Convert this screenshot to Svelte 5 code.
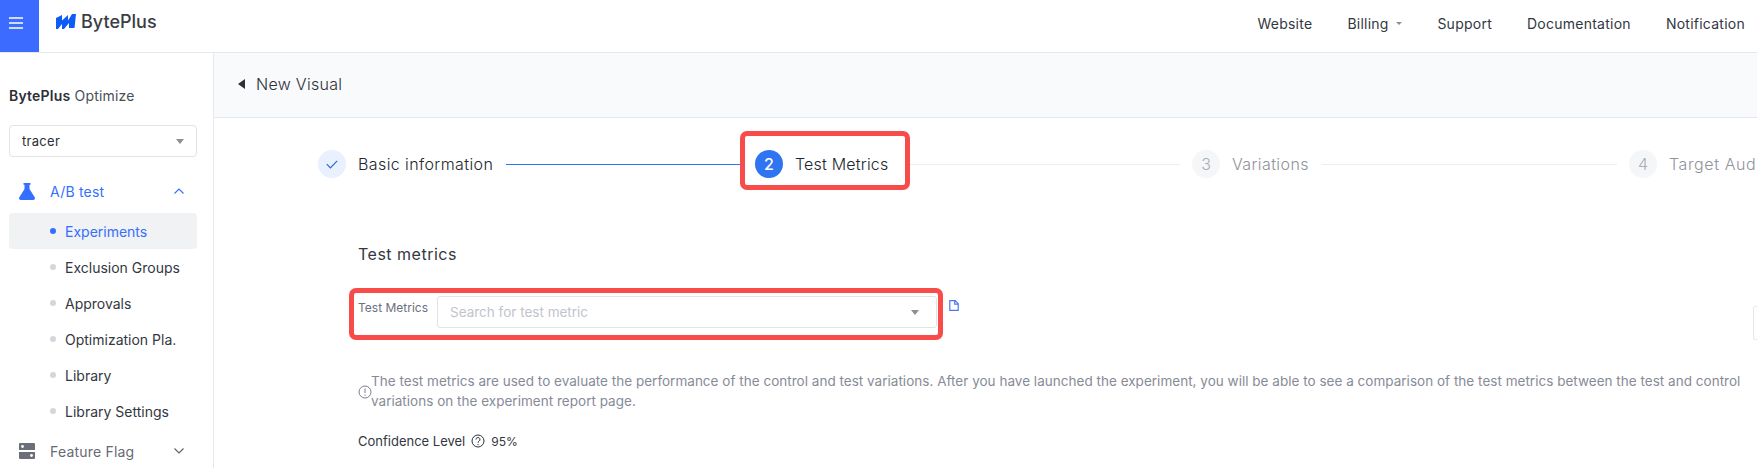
<script>
  const subItems = ['Exclusion Groups', 'Approvals', 'Optimization Pla.', 'Library', 'Library Settings'];
  const nav = ['Support', 'Documentation', 'Notification'];
</script>

<div class="page">
  <header class="top">
    <div class="burger">
      <svg width="14" height="12" viewBox="0 0 14 12"><path d="M0 1h14M0 6h14M0 11h14" stroke="#fff" stroke-width="1.4"/></svg>
    </div>
    <div class="logo">
      <svg width="20" height="15" viewBox="0 0 20 15"><path d="M0 4 6 1V6.500L12 1V6.500L16 0H20L18.500 14H13V9L8 15H6V10L2 15H0Z" fill="#0d5cf5"/></svg>
      <span>BytePlus</span>
    </div>
    <nav class="nav">
      <span>Website</span>
      <span class="billing">Billing <i class="caret small"></i></span>
      {#each nav as n}<span>{n}</span>{/each}
    </nav>
  </header>

  <div class="body">
    <aside class="side">
      <div class="brand"><b>BytePlus</b> Optimize</div>
      <div class="select"><span>tracer</span><i class="caret"></i></div>

      <div class="group active">
        <svg width="16" height="17" viewBox="0 0 16 17"><path d="M4.500 0h7v1.800h-1V6l5.200 8.300c.7 1.200 0 2.700-1.500 2.700H1.800C.3 17-.4 15.500.3 14.300L5.500 6V1.800h-1Z" fill="#3370ff"/></svg>
        <span>A/B test</span>
        <svg class="chev" width="10" height="6" viewBox="0 0 10 6"><path d="M.5 5.500 5 1l4.500 4.500" fill="none" stroke="#3370ff" stroke-width="1.100"/></svg>
      </div>
      <div class="item current"><i class="dot"></i>Experiments</div>
      {#each subItems as s}
        <div class="item"><i class="dot"></i>{s}</div>
      {/each}
      <div class="group last">
        <svg width="16" height="16" viewBox="0 0 16 16"><path d="M1 0h14a1 1 0 0 1 1 1v6H0V1a1 1 0 0 1 1-1ZM0 9h16v6a1 1 0 0 1-1 1H1a1 1 0 0 1-1-1Z" fill="#6b6f78"/><circle cx="3.500" cy="3.500" r="1.400" fill="#fff"/><circle cx="12.500" cy="12.500" r="1.400" fill="#fff"/></svg>
        <span>Feature Flag</span>
        <svg class="chev" width="10" height="6" viewBox="0 0 10 6"><path d="M.5.500 5 5 9.500.5" fill="none" stroke="#5a5f69" stroke-width="1.100"/></svg>
      </div>
    </aside>

    <main class="main">
      <div class="sub">
        <svg width="7" height="10" viewBox="0 0 7 10"><path d="M7 0v10L0 5Z" fill="#2b2f36"/></svg>
        <span>New Visual</span>
      </div>

      <div class="steps">
        <span class="circle done">
          <svg width="12" height="9" viewBox="0 0 12 9"><path d="M.8 4.200 4.400 7.800 11.200.8" fill="none" stroke="#2f66d8" stroke-width="1.200"/></svg>
        </span>
        <span class="label l1">Basic information</span>
        <span class="line blue"></span>
        <div class="highlight hl-step">
          <span class="circle now">2</span>
          <span class="label l2">Test Metrics</span>
        </div>
        <span class="line l-b"></span>
        <span class="circle todo">3</span>
        <span class="label l3 muted">Variations</span>
        <span class="line l-c"></span>
        <span class="circle todo">4</span>
        <span class="label muted last-step">Target Audience</span>
      </div>

      <div class="content">
        <h2>Test metrics</h2>
        <div class="metric-row">
          <div class="highlight hl-field">
            <span class="field-label">Test Metrics</span>
            <div class="input"><span>Search for test metric</span><i class="caret"></i></div>
          </div>
          <svg class="copy" width="10" height="11" viewBox="0 0 10 11"><path d="M.8.700h5.400L9.200 3.700v6.600H.8ZM5.700.700v3.500h3.500" fill="none" stroke="#4a78f5" stroke-width="1.200"/></svg>
        </div>

        <div class="note">
          <svg width="14" height="14" viewBox="0 0 14 14"><circle cx="7" cy="7" r="6" fill="none" stroke="#7c808c" stroke-width="1"/><path d="M7 3.500v4.500M7 9.500v1.200" stroke="#7c808c" stroke-width="1"/></svg>
          <p>The test metrics are used to evaluate the performance of the control and test variations. After you have launched the experiment, you will be able to see a comparison of the test metrics between the test and control variations on the experiment report page.</p>
        </div>

        <div class="conf">
          <span>Confidence Level</span>
          <svg width="14" height="14" viewBox="0 0 14 14"><circle cx="7" cy="7" r="6" fill="none" stroke="#2b2f36" stroke-width="1"/><path d="M5 5.500a2 2 0 1 1 3 1.700c-.7.400-1 .8-1 1.600M7 10v1" fill="none" stroke="#2b2f36" stroke-width="1"/></svg>
          <span class="pct">95%</span>
        </div>
      </div>
    </main>
  </div>
  <div class="edge-tab"></div>
</div>

<style>
  :global(body) { margin: 0; background: #fff; }
  .page { position: relative; width: 1757px; height: 468px; overflow: hidden; font-family: Inter, "Liberation Sans", sans-serif; color: #1f2329; font-size: 14px; }
  .top { display: flex; align-items: center; height: 52px; border-bottom: 1px solid #e6e8ef; background: #fff; }
  .burger { box-sizing: border-box; width: 39px; height: 52px; background: #3b6cff; padding: 17px 0 0 9px; }
  .burger svg { display: block; }
  .logo { display: flex; align-items: center; gap: 5px; margin-left: 17px; padding-bottom: 10px; font-size: 18px; font-weight: 500; color: #3a3d43; }
  .nav { margin-left: auto; display: flex; gap: 35px; padding: 0 12px 6px 0; color: #33373f; font-size: 14px; letter-spacing: .25px; }
  .billing { display: inline-flex; align-items: center; gap: 7px; width: 55px; }
  .caret { display: block; width: 0; height: 0; border-left: 4px solid transparent; border-right: 4px solid transparent; border-top: 5px solid #8b8f98; }
  .caret.small { border-left-width: 3px; border-right-width: 3px; border-top-width: 3px; }

  .body { display: flex; height: 415px; }
  .side { width: 213px; flex: none; border-right: 1px solid #e6e8ef; padding-top: 33px; }
  .brand { margin-left: 9px; height: 20px; line-height: 20px; font-size: 14px; color: #4a4e57; letter-spacing: .2px; }
  .brand b { font-weight: 600; color: #2b2f36; }
  .select { margin: 19px 16px 0 9px; height: 30px; border: 1px solid #e0e3e8; border-radius: 4px; display: flex; align-items: center; justify-content: space-between; padding: 0 12px; font-size: 13px; letter-spacing: .3px; color: #2b2f36; }
  .group { display: flex; align-items: center; margin: 0 16px 0 9px; padding: 0 13px 0 10px; height: 36px; gap: 15px; color: #666a73; font-size: 14px; letter-spacing: .2px; }
  .group.active { margin-top: 16px; margin-bottom: 4px; color: #3370ff; }
  .group.last { margin-top: 4px; }
  .chev { margin-left: auto; }
  .item { display: flex; align-items: center; margin: 0 16px 0 9px; height: 36px; padding-left: 41px; gap: 9px; font-size: 14px; color: #33373f; }
  .item.current { color: #3370ff; background: #f1f2f3; border-radius: 4px; }
  .dot { width: 6px; height: 6px; border-radius: 50%; background: #d3d6dc; }
  .current .dot { background: #3370ff; }

  .main { flex: 1; min-width: 0; }
  .sub { height: 64px; background: #f9fafc; border-bottom: 1px solid #e6e8ef; display: flex; align-items: center; padding-left: 24px; gap: 11px; font-size: 16px; font-weight: 300; letter-spacing: .3px; color: #2b2f36; }
  .sub svg, .sub span { margin-bottom: 2px; }
  .steps { display: flex; align-items: center; height: 60px; margin-top: 16px; padding-left: 104px; white-space: nowrap; }
  .steps > * { flex: none; }
  .circle { flex: none; width: 28px; height: 28px; border-radius: 50%; display: flex; align-items: center; justify-content: center; font-size: 16px; }
  .done { background: #e8f1fd; }
  .now { background: #2f74f0; color: #fff; font-weight: 500; }
  .todo { background: #f5f6f8; color: #a9adb5; font-weight: 300; }
  .label { margin-left: 12px; font-size: 16px; font-weight: 300; color: #22262d; letter-spacing: .4px; }
  .muted { color: #8f939a; }
  .l1 { width: 136px; }
  .l2 { width: 94px; letter-spacing: .2px; }
  .l3 { width: 78px; }
  .last-step { letter-spacing: .6px; }
  .line { height: 1px; background: #eceef1; margin-left: 12px; }
  .line.blue { background: #2f74f0; width: 234px; }
  .l-b { width: 270px; margin-left: 0; margin-right: 12px; }
  .l-c { width: 295px; margin-right: 12px; }
  .highlight { box-sizing: border-box; display: flex; align-items: center; border: 5px solid #f74c4a; border-radius: 7px; background: #fff; }
  .hl-step { width: 170px; height: 59px; padding: 8px 0 0 10px; margin-top: -8px; }

  .content { padding-left: 144px; }
  h2 { margin: 49px 0 0; font-size: 16px; font-weight: 400; letter-spacing: .5px; line-height: 22px; color: #33373f; }
  .metric-row { display: flex; margin-top: 23px; margin-left: -9px; align-items: flex-start; }
  .hl-field { flex: none; width: 594px; height: 52px; padding-left: 4px; align-items: flex-start; }
  .field-label { width: 79px; flex: none; font-size: 12px; line-height: 16px; margin-top: 7px; color: #6b6f80; }
  .input { flex: none; width: 500px; height: 32px; box-sizing: border-box; border: 1px solid #e0e3e8; border-radius: 3px; margin-top: 3px; display: flex; align-items: center; justify-content: space-between; padding: 0 17px 0 12px; font-size: 13.5px; color: #c0c4cc; }
  .copy { flex: none; margin: 12px 0 0 6px; }
  .note { display: flex; margin-top: 31px; align-items: center; }
  .note svg { flex: none; margin-top: 2px; margin-right: -1px; }
  .note p { margin: 0; width: 1380px; font-size: 13.5px; letter-spacing: .02px; line-height: 20px; color: #878b99; }
  .conf { display: flex; align-items: center; margin-top: 20px; font-size: 13px; color: #33373f; gap: 6px; height: 20px; }
  .pct { font-size: 12px; }
  .edge-tab { position: absolute; left: 1753px; top: 306px; width: 10px; height: 34px; box-sizing: border-box; border: 1px solid #e6e8ef; border-radius: 2px; background: #fff; }
</style>
